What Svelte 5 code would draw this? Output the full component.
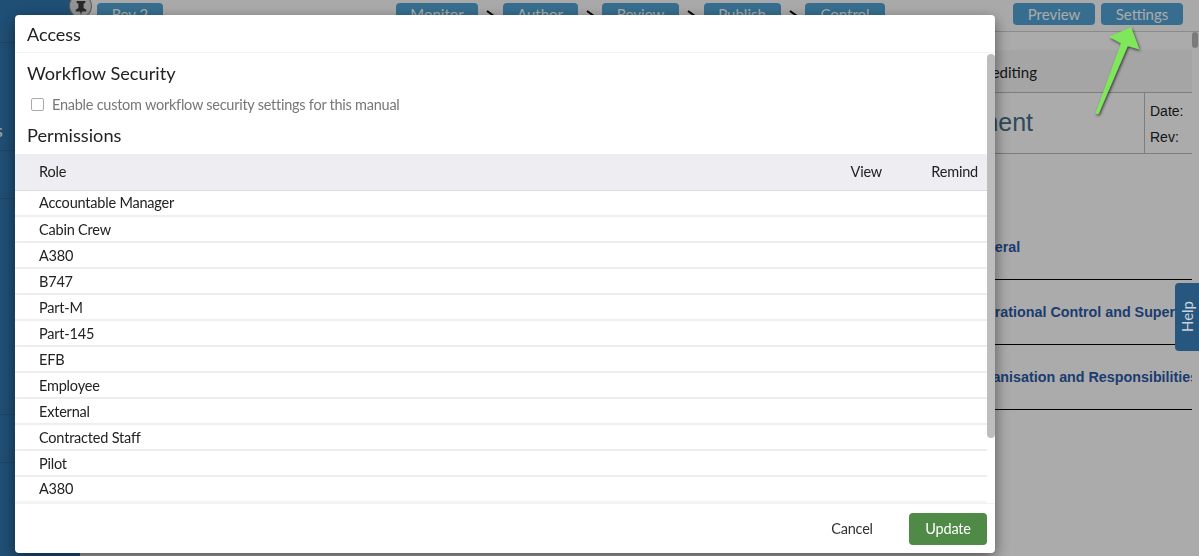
<script>
	const steps = ['Monitor', 'Author', 'Review', 'Publish', 'Control'];
	const roles = [
		'Accountable Manager', 'Cabin Crew', 'A380', 'B747', 'Part-M', 'Part-145',
		'EFB', 'Employee', 'External', 'Contracted Staff', 'Pilot', 'A380'
	];
	const sections = ['General', 'Operational Control and Supervision', 'Organisation and Responsibilities'];
</script>

<div class="app">
	<aside class="sidebar">
		<div class="side-row" style="height: 43px"></div>
		<div class="side-row side-label" style="height: 108px">s</div>
		<div class="side-row" style="height: 48px"></div>
		<div class="side-row" style="height: 216px"></div>
		<div class="side-row" style="height: 48px"></div>
	</aside>

	<main class="main">
		<header class="topbar">
			<span class="pin">
				<svg viewBox="0 0 16 16" width="14" height="14">
					<path d="M3 0h10v2l-2 1v5l3 2v2H9l-1 4-1-4H2v-2l3-2V3L3 2z" fill="#3c3c3c" />
				</svg>
			</span>
			<button class="btn rev">Rev 2</button>
			<nav class="steps">
				{#each steps as step, i}
					{#if i > 0}
						<span class="chev">
							<svg viewBox="0 0 10 10" width="10" height="10">
								<path d="M2 1 7.5 5 4 9" fill="none" stroke="#000" stroke-width="2" />
							</svg>
						</span>
					{/if}
					<button class="btn step-{i}">{step}</button>
				{/each}
			</nav>
			<div class="actions">
				<button class="btn action">Preview</button>
				<button class="btn action">Settings</button>
			</div>
		</header>

		<section class="doc">
			<div class="doc-note">You are editing</div>
			<div class="doc-head">
				<div class="doc-title">Controlled Document</div>
				<div class="doc-meta">
					<span>Date:</span>
					<span>Rev:</span>
				</div>
			</div>
			<ul class="toc">
				{#each sections as s}
					<li>{s}</li>
				{/each}
			</ul>
		</section>
	</main>
</div>

<div class="backdrop"></div>

<div class="page-scroll"></div>

<svg class="arrow" viewBox="0 0 60 100" width="60" height="100">
	<defs>
		<filter id="arrow-shadow" x="-30%" y="-30%" width="160%" height="160%">
			<feDropShadow dx="1" dy="1.5" stdDeviation="1.5" flood-color="#000" flood-opacity="0.7" />
		</filter>
	</defs>
	<path d="M41 7.3 49.3 29.3 37.7 26 8.5 94 5.5 93.5 31 23.3 19 16.7z" fill="#7fe85a" filter="url(#arrow-shadow)" />
</svg>

<button class="help">Help</button>

<div class="modal">
	<div class="modal-header">Access</div>
	<div class="modal-body">
		<h4>Workflow Security</h4>
		<label class="check">
			<span class="box"></span>
			Enable custom workflow security settings for this manual
		</label>
		<h4 class="perm">Permissions</h4>
		<table>
			<thead>
				<tr>
					<th class="role">Role</th>
					<th class="view">View</th>
					<th class="remind">Remind</th>
				</tr>
			</thead>
			<tbody>
				{#each roles as role}
					<tr>
						<td class="role">{role}</td>
						<td></td>
						<td></td>
					</tr>
				{/each}
			</tbody>
		</table>
		<div class="scrollbar"></div>
	</div>
	<div class="modal-footer">
		<button class="cancel">Cancel</button>
		<button class="update">Update</button>
	</div>
</div>

<style>
	:global(body) {
		margin: 0;
		overflow: hidden;
		background: #fff;
		font-family: Lato, "Liberation Sans", sans-serif;
	}

	button {
		font-family: inherit;
		cursor: pointer;
	}

	.app {
		display: flex;
		height: 556px;
		overflow: hidden;
	}

	.sidebar {
		width: 80px;
		flex: none;
		background: #2f76ae;
	}

	.side-row {
		border-bottom: 1px solid #2a6898;
		box-sizing: border-box;
		color: #fff;
		font-size: 18px;
	}

	.side-label {
		padding-top: 76px;
		margin-left: -5px;
		line-height: 22px;
	}

	.main {
		flex: 1;
		min-width: 0;
		display: flex;
		flex-direction: column;
	}

	.topbar {
		height: 32px;
		flex: none;
		box-sizing: border-box;
		border-bottom: 1px solid #d0d0d0;
		background: #fdfdfd;
		display: flex;
		align-items: flex-start;
		padding-top: 3px;
	}

	.pin {
		width: 23px;
		height: 24px;
		box-sizing: border-box;
		margin: -9px 0 0 -11px;
		padding-top: 3px;
		border-radius: 50%;
		border: 1px solid #888;
		background: #ddd;
		display: flex;
		align-items: center;
		justify-content: center;
	}

	.btn {
		height: 22px;
		border: none;
		border-radius: 4px;
		padding: 0;
		background: #52a4d5;
		color: #fff;
		font-size: 15px;
		line-height: 22px;
	}

	.rev {
		width: 66px;
		margin-left: 5px;
	}

	.steps {
		display: flex;
		align-items: flex-start;
		margin-left: 233px;
	}

	.step-0 { width: 82px; }
	.step-1 { width: 75px; }
	.step-2 { width: 77px; }
	.step-3 { width: 77px; }
	.step-4 { width: 80px; }

	.chev {
		width: 24.5px;
		height: 22px;
		display: flex;
		align-items: center;
		justify-content: center;
		padding-top: 2px;
		box-sizing: border-box;
	}

	.actions {
		display: flex;
		gap: 6px;
		margin-left: auto;
		margin-right: 16px;
	}

	.action {
		width: 82px;
	}

	.doc {
		flex: 1;
		margin-right: 7px;
		padding: 18px 0 0 20px;
	}

	.doc-note {
		height: 43px;
		box-sizing: border-box;
		border-bottom: 1px solid #bbb;
		background: #f7f7f7;
		text-align: right;
		padding: 13px 155px 0 0;
		font-size: 15px;
		color: #222;
	}

	.doc-head {
		display: flex;
		height: 61px;
		box-sizing: border-box;
		border-bottom: 1px solid #bbb;
		font-family: "Liberation Sans", sans-serif;
	}

	.doc-title {
		width: 1045px;
		flex: none;
		box-sizing: border-box;
		border-right: 1px solid #bbb;
		text-align: right;
		padding: 15px 111px 0 0;
		font-size: 25px;
		color: #466f89;
	}

	.doc-meta {
		display: flex;
		flex-direction: column;
		gap: 10px;
		padding: 10px 0 0 5px;
		font-size: 14px;
		color: #222;
	}

	.toc {
		list-style: none;
		margin: 0;
		padding: 61px 0 0;
		font-family: "Liberation Sans", sans-serif;
		font-weight: 700;
		font-size: 14.3px;
		color: #2a5aa8;
		overflow: hidden;
	}

	.toc li {
		height: 65px;
		box-sizing: border-box;
		border-bottom: 1px solid #000;
		white-space: nowrap;
		line-height: 64px;
		padding-left: 867px;
		overflow: hidden;
	}

	.backdrop {
		position: fixed;
		inset: 0;
		background: rgba(0, 0, 0, 0.33);
	}

	.page-scroll {
		position: fixed;
		left: 1192px;
		top: 32px;
		width: 6px;
		height: 16px;
		border-radius: 3px;
		background: #7b7b7b;
	}

	.arrow {
		position: fixed;
		left: 1090px;
		top: 20px;
	}

	.help {
		position: fixed;
		left: 1175px;
		top: 283px;
		width: 24px;
		height: 68px;
		padding: 0;
		border: none;
		border-radius: 4px 0 0 4px;
		background: #27567f;
		color: #c9d3dc;
		font-size: 15px;
		writing-mode: sideways-lr;
	}

	.modal {
		position: fixed;
		left: 15px;
		top: 15px;
		width: 980px;
		height: 538px;
		background: #fff;
		border-radius: 4px;
		box-shadow: 0 5px 15px rgba(0, 0, 0, 0.5);
		display: flex;
		flex-direction: column;
		overflow: hidden;
		color: #222;
	}

	.modal-header {
		height: 38px;
		flex: none;
		box-sizing: border-box;
		border-bottom: 1px solid #f2f2f2;
		padding: 8px 12px 0;
		font-size: 18px;
		line-height: 22px;
	}

	.modal-body {
		flex: 1;
		min-height: 0;
		padding-right: 8px;
		position: relative;
		overflow: hidden;
	}

	h4 {
		margin: 0;
		padding: 8px 12px 0;
		font-size: 18.2px;
		font-weight: 400;
		line-height: 24px;
	}

	.perm {
		padding-top: 6px;
		padding-bottom: 7px;
	}

	.check {
		display: flex;
		align-items: center;
		gap: 8px;
		height: 32px;
		padding: 6px 0 0 16px;
		box-sizing: border-box;
		font-size: 14.5px;
		letter-spacing: -0.25px;
		color: #777;
	}

	.box {
		width: 13px;
		height: 13px;
		box-sizing: border-box;
		border: 1.5px solid #aaa;
		border-radius: 2px;
	}

	table {
		width: 100%;
		border-collapse: collapse;
		font-size: 14.5px;
		letter-spacing: -0.2px;
		border-bottom: 3px solid #f4f4f4;
	}

	th {
		height: 36px;
		box-sizing: border-box;
		padding: 0;
		background: #eeeef2;
		border-bottom: 1px solid #ddd;
		font-weight: 400;
		color: #222;
	}

	td {
		height: 26px;
		box-sizing: border-box;
		padding: 0;
		border-bottom: 2px solid #eee;
	}

	.role {
		text-align: left;
		padding-left: 24px;
	}

	.view {
		width: 100px;
		text-align: right;
		padding-right: 9px;
	}

	.remind {
		width: 96px;
		text-align: right;
		padding-right: 9px;
	}

	.scrollbar {
		position: absolute;
		right: 0;
		top: 1px;
		width: 8px;
		height: 384px;
		border-radius: 4px;
		background: #bdbdbd;
	}

	.modal-footer {
		height: 50px;
		flex: none;
		box-sizing: border-box;
		border-top: 1px solid #f2f2f2;
		display: flex;
		align-items: center;
		justify-content: flex-end;
		gap: 29px;
		padding: 0 8px 0 0;
	}

	.cancel {
		width: 56px;
		height: 32px;
		padding: 0;
		border: none;
		background: none;
		color: #333;
		font-size: 14.5px;
		letter-spacing: -0.2px;
	}

	.update {
		width: 78px;
		height: 32px;
		padding: 0;
		border: none;
		border-radius: 4px;
		background: #4f8b47;
		color: #fff;
		font-size: 14.5px;
		letter-spacing: -0.2px;
	}
</style>
